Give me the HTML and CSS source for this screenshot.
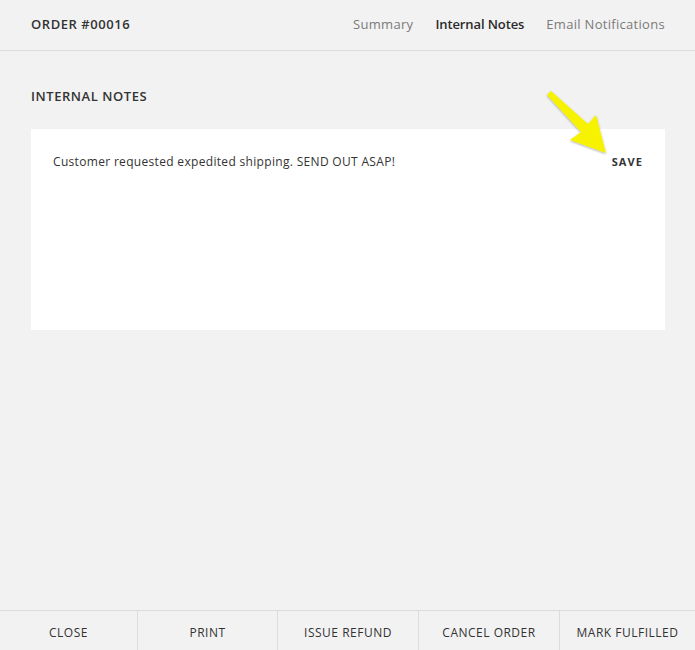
FILE: index.html
```html
<!DOCTYPE html>
<html>
<head>
<meta charset="utf-8">
<link rel="stylesheet" href="styles.css">
</head>
<body>
<div class="page">
  <header class="topbar">
    <div class="title">ORDER #00016</div>
    <nav class="tabs">
      <span class="tab">Summary</span>
      <span class="tab active">Internal Notes</span>
      <span class="tab">Email Notifications</span>
    </nav>
  </header>
  <main class="content">
    <h2 class="section-title">INTERNAL NOTES</h2>
    <div class="card">
      <div class="note">Customer requested expedited shipping. SEND OUT ASAP!</div>
      <div class="save">SAVE</div>
    </div>
    <svg class="arrow" width="80" height="80" viewBox="540 85 80 80">
      <defs>
        <filter id="sh" x="-20%" y="-20%" width="140%" height="140%">
          <feDropShadow dx="0" dy="1" stdDeviation="1" flood-color="#000" flood-opacity="0.35"/>
        </filter>
      </defs>
      <polygon filter="url(#sh)" fill="#f7f200" points="547,95 581,132 570,140 606,153 596,115 588,124 551,91"/>
    </svg>
  </main>
  <footer class="actions">
    <div class="action">CLOSE</div>
    <div class="action">PRINT</div>
    <div class="action">ISSUE REFUND</div>
    <div class="action">CANCEL ORDER</div>
    <div class="action">MARK FULFILLED</div>
  </footer>
</div>
</body>
</html>
```

FILE: styles.css
```css
html, body {
  margin: 0;
  padding: 0;
  background: #f2f2f2;
}
body {
  font-family: "Open Sans", "Liberation Sans", sans-serif;
  color: #333;
}
.page {
  height: 650px;
  display: flex;
  flex-direction: column;
  position: relative;
}
.topbar {
  height: 51px;
  box-sizing: border-box;
  border-bottom: 1px solid #dcdcdc;
  display: flex;
  align-items: center;
  justify-content: space-between;
  padding: 0 30px 3px 31px;
}
.title {
  font-size: 13px;
  font-weight: 600;
  letter-spacing: 0.55px;
  color: #333;
}
.tabs {
  display: flex;
  gap: 22px;
  font-size: 13px;
  letter-spacing: 0.3px;
}
.tab {
  color: #7a7a7a;
}
.tab.active {
  color: #2a2a2a;
  font-weight: 600;
  letter-spacing: -0.1px;
}
.content {
  flex: 1;
  padding: 0 30px 0 31px;
  position: relative;
}
.section-title {
  margin: 37px 0 0;
  font-size: 13px;
  font-weight: 600;
  letter-spacing: 0.55px;
  line-height: 16px;
  color: #333;
}
.card {
  margin-top: 25px;
  height: 201px;
  background: #fff;
  display: flex;
  justify-content: space-between;
  align-items: flex-start;
  padding: 25px 22px 0 22px;
  box-sizing: border-box;
}
.note {
  font-size: 12px;
  letter-spacing: 0.32px;
  color: #333;
  line-height: 16px;
}
.save {
  font-size: 11px;
  font-weight: 700;
  letter-spacing: 1.1px;
  color: #333;
  line-height: 16px;
}
.arrow {
  position: absolute;
  left: 540px;
  top: 34px;
}
.actions {
  height: 40px;
  border-top: 1px solid #dcdcdc;
  display: grid;
  grid-template-columns: 137px 140px 141px 141px 1fr;
  box-sizing: border-box;
}
.action {
  display: flex;
  align-items: center;
  justify-content: center;
  padding-top: 3px;
  font-size: 12px;
  letter-spacing: 0.5px;
  color: #333;
  border-left: 1px solid #dcdcdc;
}
.action:first-child {
  border-left: none;
}
```
